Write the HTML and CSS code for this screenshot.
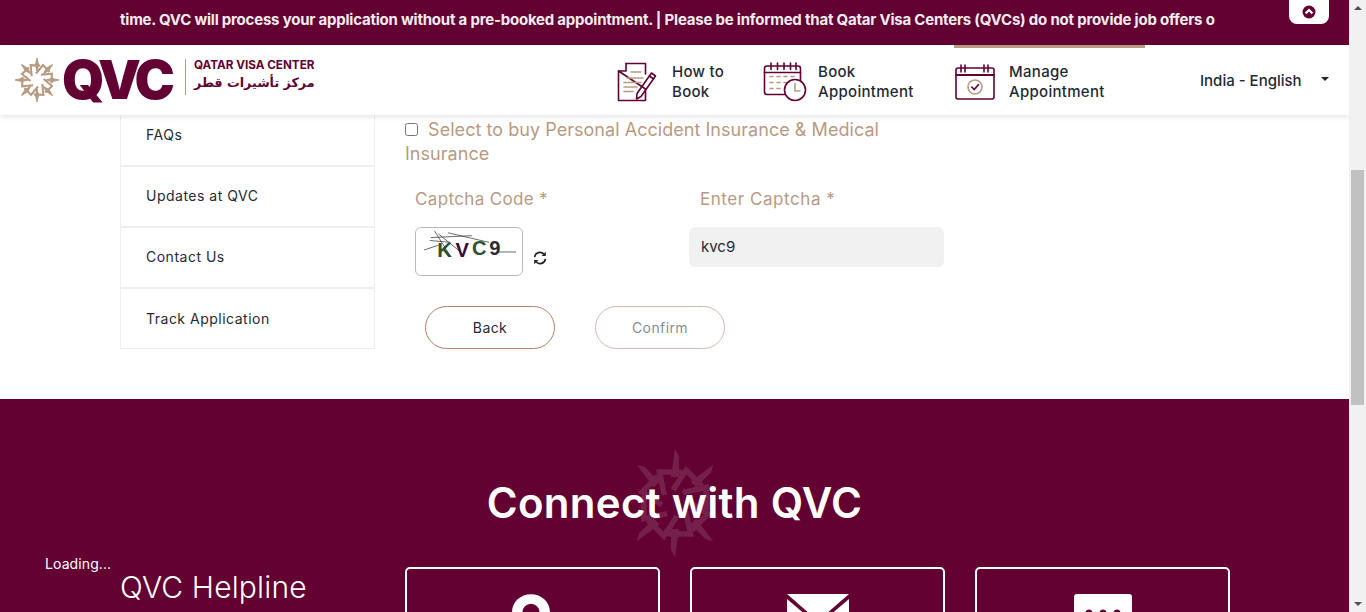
FILE: index.html
```html
<!DOCTYPE html>
<html lang="en">
<head>
  <meta charset="UTF-8" />
  <meta name="viewport" content="width=device-width, initial-scale=1.0" />
  <title>Book Appointment - QVC</title>
  <link rel="stylesheet" href="styles.css">
</head>
<body>
  <svg class="defs" width="0" height="0" aria-hidden="true">
    <defs>
      <g id="star-ring" fill="none" stroke-width="2.1" stroke-linejoin="miter">
        <path d="M-1 -6.5 L6 -15 L12.5 -8" />
      </g>
      <path id="star-spike" d="M0 -22 L1.6 -15 L0 -9 L-1.6 -15 Z" />
      <g id="star">
        <use href="#star-ring" />
        <use href="#star-ring" transform="rotate(45)" />
        <use href="#star-ring" transform="rotate(90)" />
        <use href="#star-ring" transform="rotate(135)" />
        <use href="#star-ring" transform="rotate(180)" />
        <use href="#star-ring" transform="rotate(225)" />
        <use href="#star-ring" transform="rotate(270)" />
        <use href="#star-ring" transform="rotate(315)" />
        <use href="#star-spike" />
        <use href="#star-spike" transform="rotate(45)" />
        <use href="#star-spike" transform="rotate(90)" />
        <use href="#star-spike" transform="rotate(135)" />
        <use href="#star-spike" transform="rotate(180)" />
        <use href="#star-spike" transform="rotate(225)" />
        <use href="#star-spike" transform="rotate(270)" />
        <use href="#star-spike" transform="rotate(315)" />
      </g>
      <g id="mark-ring" fill="none" stroke="#fff" stroke-width="5.5">
        <path d="M-2 -13 L11 -33 L27 -17" />
      </g>
      <path id="mark-spike" d="M-4 -26 L0 -54 L4 -47 L4 -26 Z" />
      <g id="mark">
        <use href="#mark-ring" />
        <use href="#mark-ring" transform="rotate(45)" />
        <use href="#mark-ring" transform="rotate(90)" />
        <use href="#mark-ring" transform="rotate(135)" />
        <use href="#mark-ring" transform="rotate(180)" />
        <use href="#mark-ring" transform="rotate(225)" />
        <use href="#mark-ring" transform="rotate(270)" />
        <use href="#mark-ring" transform="rotate(315)" />
        <use href="#mark-spike" />
        <use href="#mark-spike" transform="rotate(45)" />
        <use href="#mark-spike" transform="rotate(135)" />
        <use href="#mark-spike" transform="rotate(180)" />
        <use href="#mark-spike" transform="rotate(225)" />
        <use href="#mark-spike" transform="rotate(315)" />
      </g>
    </defs>
  </svg>

  <div class="window">
    <div class="page">
      <div class="ticker">
        <div class="ticker-text">time. QVC will process your application without a pre-booked appointment. | Please be informed that Qatar Visa Centers (QVCs) do not provide job offers o</div>
        <button class="ticker-toggle" type="button" aria-label="Collapse">
          <svg width="14" height="14" viewBox="0 0 14 14">
            <circle cx="7" cy="7" r="6.5" fill="#620132" />
            <path d="M3.6 8.4 L7 5 L10.4 8.4" fill="none" stroke="#fff" stroke-width="2.2" />
          </svg>
        </button>
      </div>

      <header class="site-header">
        <a class="logo" href="#">
          <svg class="logo-star" width="44" height="44" viewBox="-22 -22 44 44" fill="#b89a83" stroke="#b89a83">
            <use href="#star" />
          </svg>
          <span class="logo-word">QVC</span>
          <span class="logo-names">
            <span class="logo-en">QATAR VISA CENTER</span>
            <span class="logo-ar" lang="ar" dir="rtl">مركز تأشيرات قطر</span>
          </span>
        </a>

        <nav class="main-nav">
          <a class="nav-item nav-how" href="#">
            <svg width="40" height="40" viewBox="0 0 40 40" fill="none" stroke="#620132" stroke-width="1.6" stroke-linejoin="round" stroke-linecap="round">
              <path d="M9 1.5 H28.5 V12 M28.5 27 V38.5 H1.5 V9 Z" />
              <path d="M1.5 9 H9 V1.5" />
              <path d="M20 31.5 L34.5 11 L38.5 14 L24 34.5 L19.5 37 Z" />
              <path d="M32.5 14 L36.5 17" />
              <path d="M14 10 H24 M10 16 H26 M7 20.5 H24 M7 25 H20 M7 29.5 H16" stroke="#b89a83" />
            </svg>
            <span>How to<br>Book</span>
          </a>
          <a class="nav-item nav-book" href="#">
            <svg width="44" height="40" viewBox="0 0 44 40" fill="none" stroke="#620132" stroke-width="1.6" stroke-linecap="round">
              <path d="M24 32.5 H4 Q1.5 32.5 1.5 30 V6.5 Q1.5 4 4 4 H35 Q37.5 4 37.5 6.5 V21" />
              <path d="M1.5 10.5 H37.5" />
              <path d="M8 1 V7.5 M14.5 1 V7.5 M21 1 V7.5 M27.5 1 V7.5 M33 1 V7.5" />
              <path d="M7 14.5 H10 M14 14.5 H17 M21 14.5 H24 M28 14.5 H31 M7 20.5 H10 M14 20.5 H17 M21 20.5 H24 M7 26.5 H10 M14 26.5 H17" stroke="#b89a83" />
              <circle cx="32" cy="28" r="10.5" fill="#fff" />
              <path d="M32 21.5 V29 H37" stroke="#b89a83" />
            </svg>
            <span>Book<br>Appointment</span>
          </a>
          <a class="nav-item nav-manage is-active" href="#">
            <svg width="40" height="36" viewBox="0 0 40 36" fill="none" stroke="#620132" stroke-width="1.6" stroke-linecap="round">
              <rect x="1" y="4" width="38" height="31" rx="2" />
              <path d="M1 11 H39" stroke-width="2" />
              <path d="M6 1 V8 M10 1 V8 M29 1 V8 M33 1 V8" />
              <circle cx="20" cy="23" r="7" stroke="#b89a83" />
              <path d="M16.8 23 L19.2 25.5 L23.5 20.5" />
            </svg>
            <span>Manage<br>Appointment</span>
          </a>
        </nav>

        <div class="lang">India - English<span class="caret"></span></div>
      </header>

      <main class="content">
        <ul class="side-menu">
          <li>FAQs</li>
          <li>Updates at QVC</li>
          <li>Contact Us</li>
          <li>Track Application</li>
        </ul>

        <form class="apply-form">
          <label class="insurance">
            <input type="checkbox" />
            Select to buy Personal Accident Insurance &amp; Medical Insurance
          </label>

          <div class="captcha-row">
            <div class="captcha-col">
              <div class="field-label">Captcha Code *</div>
              <div class="captcha-wrap">
                <svg class="captcha" width="108" height="49" viewBox="0 0 108 49">
                  <g class="captcha-chars">
                    <text x="21" y="30" fill="#2f5233">K</text>
                    <text x="40" y="30" fill="#3a0a3a">V</text>
                    <text x="57" y="28" fill="#2f5233">C</text>
                    <text x="75" y="28" fill="#2b2b33">9</text>
                  </g>
                  <path d="M18 3 L35 30 M14 10 L57 8 M32 5 L75 15 M7 23 L22 18 M13 13 L35 15 M85 25 L103 25 M22 6 L44 24" fill="none" stroke="#222" stroke-width="0.7" />
                </svg>
                <svg class="refresh" width="14" height="14" viewBox="0 0 14 14" fill="none" stroke="#222" stroke-width="1.7">
                  <path d="M1.6 6.2 A5.4 5.4 0 0 1 11 3.2" />
                  <path d="M12.4 7.8 A5.4 5.4 0 0 1 3 10.8" />
                  <path d="M12.8 0.8 V5 H8.6 Z M1.2 13.2 V9 H5.4 Z" fill="#222" stroke="none" />
                </svg>
              </div>
            </div>
            <div class="captcha-col entry-col">
              <div class="field-label">Enter Captcha *</div>
              <input class="captcha-input" type="text" value="kvc9" />
            </div>
          </div>

          <div class="form-actions">
            <button class="pill" type="button">Back</button>
            <button class="pill is-disabled" type="button">Confirm</button>
          </div>
        </form>
      </main>

      <footer class="connect">
        <svg class="connect-mark" width="108" height="108" viewBox="-54 -54 108 108" fill="#fff">
          <use href="#mark" />
        </svg>
        <h2>Connect with QVC</h2>
        <div class="connect-row">
          <div class="helpline">QVC Helpline</div>
          <div class="connect-card">
            <svg class="pin" width="38" height="48" viewBox="0 0 40 50">
              <path fill-rule="evenodd" d="M20 0 C31 0 40 8 40 19 C40 32 20 50 20 50 C20 50 0 32 0 19 C0 8 9 0 20 0 Z M20 10 A9 9 0 1 0 20 28 A9 9 0 1 0 20 10 Z" fill="#fff" />
            </svg>
          </div>
          <div class="connect-card">
            <svg width="62" height="44" viewBox="0 0 62 44">
              <path d="M0 0 H62 L31 27 Z" fill="#fff" />
              <path d="M0 5 L20 22 L0 40 Z M62 5 L42 22 L62 40 Z M0 44 L23 25 L31 31 L39 25 L62 44 Z" fill="#fff" />
            </svg>
          </div>
          <div class="connect-card">
            <svg width="58" height="46" viewBox="0 0 58 46">
              <path d="M3 0 H55 Q58 0 58 3 V35 Q58 38 55 38 H20 L8 46 V38 H3 Q0 38 0 35 V3 Q0 0 3 0 Z" fill="#fff" />
              <circle cx="15" cy="19" r="3.5" fill="#620132" />
              <circle cx="29" cy="19" r="3.5" fill="#620132" />
              <circle cx="43" cy="19" r="3.5" fill="#620132" />
            </svg>
          </div>
        </div>
        <div class="loading">Loading...</div>
      </footer>
    </div>

    <div class="scrollbar">
      <span class="arrow arrow-up"></span>
      <div class="scroll-track"><div class="scroll-thumb"></div></div>
      <span class="arrow arrow-down"></span>
    </div>
  </div>
</body>
</html>
```

FILE: styles.css
```css
/* Base & Layout Styles */
* { box-sizing: border-box; }
html, body { height: 100%; }
body {
  margin: 0;
  font-family: Inter, "Open Sans", sans-serif;
  color: #1f2a37;
  background: #fff;
  overflow: hidden;
}
a { color: inherit; text-decoration: none; }
.defs { display: block; height: 0; }
.window {
  display: flex;
  height: 100vh;
  overflow: hidden;
}
.page {
  flex: 1;
  min-width: 0;
  display: flex;
  flex-direction: column;
  overflow: hidden;
}

/* Ticker */
.ticker {
  position: relative;
  flex: none;
  height: 45px;
  padding: 11px 134px 0 120px;
  background: #620132;
}
.ticker-text {
  white-space: nowrap;
  font-size: 15px;
  line-height: 18px;
  font-weight: 700;
  letter-spacing: -0.215px;
  color: #f3ecef;
}
.ticker-toggle {
  position: absolute;
  top: 0;
  left: 1289px;
  width: 40px;
  height: 24px;
  padding: 0;
  display: flex;
  align-items: center;
  justify-content: center;
  border: none;
  background: #fff;
  border-radius: 0 0 8px 8px;
}

/* Header */
.site-header {
  position: relative;
  z-index: 2;
  flex: none;
  height: 70px;
  display: flex;
  align-items: center;
  background: #fff;
  box-shadow: 0 2px 5px rgba(0, 0, 0, 0.1);
}
.logo {
  width: 617px;
  padding-left: 15px;
  display: flex;
  align-items: center;
}
.logo-star { flex: none; margin-right: 3px; }
.logo-word {
  width: 123px;
  font-size: 54px;
  line-height: 60px;
  font-weight: 900;
  letter-spacing: -4px;
  color: #620132;
}
.logo-names {
  display: flex;
  flex-direction: column;
  height: 36px;
  margin-bottom: 6px;
  padding-left: 8px;
  border-left: 1px solid #b89a83;
  color: #620132;
}
.logo-en {
  font-size: 11.7px;
  line-height: 13px;
  font-weight: 700;
  white-space: nowrap;
}
.logo-ar {
  font-family: "DejaVu Sans", sans-serif;
  font-size: 12.7px;
  line-height: 22px;
  font-weight: 700;
  text-align: right;
  white-space: nowrap;
}
.main-nav {
  display: flex;
  height: 70px;
}
.nav-item {
  display: flex;
  align-items: center;
  gap: 15px;
  font-size: 15px;
  line-height: 20px;
  font-weight: 500;
  letter-spacing: 0.3px;
  border-top: 3px solid transparent;
}
.nav-item svg { flex: none; }
.nav-item span { padding-top: 1px; }
.nav-how { width: 146px; }
.nav-book { width: 191px; gap: 11px; }
.nav-manage { width: 191px; padding-left: 1px; gap: 14px; }
.is-active { border-top-color: #b89a83; }
.lang {
  margin-left: 55px;
  display: flex;
  align-items: center;
  font-size: 15px;
  font-weight: 500;
  white-space: nowrap;
}
.caret {
  margin-left: 19px;
  margin-bottom: 3px;
  border-top: 4px solid #222;
  border-left: 4px solid transparent;
  border-right: 4px solid transparent;
}

/* Content */
.content {
  flex: none;
  height: 284px;
  padding-left: 120px;
  display: flex;
  align-items: flex-start;
}
.side-menu {
  flex: none;
  width: 255px;
  margin: 0;
  padding: 0;
  list-style: none;
  border: 1px solid #eee;
  border-top: none;
}
.side-menu li {
  height: 61px;
  padding: 0 0 2px 25px;
  display: flex;
  align-items: center;
  font-size: 14px;
  letter-spacing: 0.5px;
  border-bottom: 2px solid #eee;
}
.side-menu li:first-child {
  height: 52px;
  padding-bottom: 12px;
}
.side-menu li:last-child {
  height: 59px;
  padding-bottom: 0;
  border-bottom: none;
}
.apply-form {
  width: 540px;
  margin-left: 30px;
}
.insurance {
  display: block;
  padding-top: 3px;
  font-size: 18px;
  line-height: 24px;
  letter-spacing: 0.04px;
  color: #b89a83;
}
.insurance input {
  width: 13px;
  height: 13px;
  margin: 0 5px 0 0;
}
.captcha-row {
  display: flex;
  margin-top: 21px;
}
.captcha-col { width: 284px; padding-left: 10px; }
.entry-col { width: 255px; padding-left: 0; }
.field-label {
  height: 32px;
  font-size: 17px;
  line-height: 24px;
  letter-spacing: 0.35px;
  color: #b89a83;
}
.entry-col .field-label {
  padding-left: 11px;
  letter-spacing: 0.55px;
}
.captcha-wrap {
  display: flex;
  align-items: flex-end;
  margin-top: 8px;
}
.captcha {
  display: block;
  border: 1px solid #bbb;
  border-radius: 6px;
}
.captcha-chars {
  font-family: "Liberation Sans", sans-serif;
  font-size: 21px;
  font-weight: 700;
}
.refresh { margin: 0 0 11px 10px; }
.captcha-input {
  display: block;
  width: 255px;
  height: 40px;
  margin-top: 8px;
  padding: 0 12px 2px;
  border: none;
  border-radius: 6px;
  background: #f1f1f1;
  font-family: inherit;
  font-size: 15px;
  color: #1f2a37;
}
.form-actions {
  display: flex;
  gap: 40px;
  margin-top: 30px;
  padding-left: 20px;
}
.pill {
  width: 130px;
  height: 43px;
  border: 1px solid #b4806a;
  border-radius: 22px;
  background: #fff;
  font-family: inherit;
  font-size: 14px;
  letter-spacing: 0.4px;
  color: #1f2a37;
}
.is-disabled { opacity: 0.55; }

/* Connect footer */
.connect {
  position: relative;
  flex: 1;
  min-height: 0;
  background: #620132;
  color: #fff;
}
.connect-mark {
  position: absolute;
  top: 50px;
  left: 621px;
  opacity: 0.12;
}
.connect h2 {
  position: relative;
  margin: 0;
  padding-top: 79px;
  text-align: center;
  font-size: 42px;
  line-height: 50px;
  font-weight: 600;
  letter-spacing: 0.3px;
}
.connect-row {
  display: grid;
  grid-template-columns: repeat(4, 255px);
  column-gap: 30px;
  margin-top: 39px;
  padding-left: 120px;
}
.helpline {
  padding-top: 3px;
  font-size: 30px;
  line-height: 34px;
  font-weight: 300;
  letter-spacing: 0.15px;
}
.connect-card {
  height: 150px;
  padding-top: 25px;
  display: flex;
  justify-content: center;
  align-items: flex-start;
  border: 2px solid #fff;
  border-radius: 5px;
}
.pin { margin-right: 3px; }
.loading {
  position: absolute;
  top: 156px;
  left: 45px;
  font-size: 14px;
  line-height: 18px;
  letter-spacing: 0.1px;
}

/* Scrollbar */
.scrollbar {
  flex: none;
  width: 17px;
  display: flex;
  flex-direction: column;
  align-items: center;
  background: #f1f1f1;
}
.arrow {
  flex: none;
  width: 0;
  height: 0;
  border-left: 4px solid transparent;
  border-right: 4px solid transparent;
}
.arrow-up { margin: 6px 0; border-bottom: 4px solid #505050; }
.arrow-down { margin: 6px 0; border-top: 4px solid #505050; }
.scroll-track { flex: 1; width: 100%; padding-top: 154px; }
.scroll-thumb {
  width: 13px;
  height: 235px;
  margin: 0 auto;
  background: #c1c1c1;
}
```
